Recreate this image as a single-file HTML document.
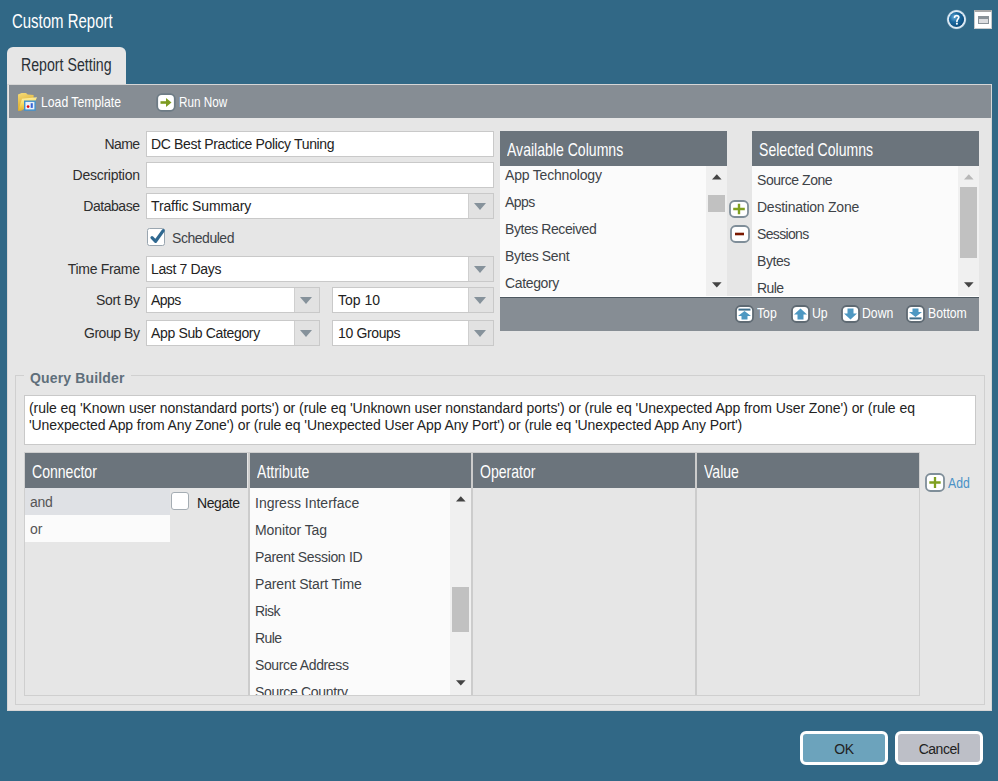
<!DOCTYPE html>
<html><head><meta charset="utf-8">
<style>
*{box-sizing:border-box;margin:0;padding:0}
html,body{width:998px;height:781px;overflow:hidden;background:#316886;font-family:"Liberation Sans",sans-serif;}
.a{position:absolute}
.c{position:absolute;white-space:nowrap;transform-origin:0 0}
.t{position:absolute;white-space:nowrap;font-size:14px;letter-spacing:-0.3px;color:#3e4348}
#title{left:12px;top:10px;color:#fff;font-size:20px;transform:scaleX(0.748)}
#help{left:947px;top:10px;width:19px;height:19px;border-radius:50%;background:radial-gradient(circle at 45% 40%,#3f8fc4 0,#1f5f93 60%,#174e7c 100%);border:2px solid #dce8f0}
#max{left:974px;top:10px;width:18px;height:19px;background:#fff;border:1px solid #c8cacc;border-top:2px solid #a8a8a8}
#max i{position:absolute;left:3px;top:4px;width:11px;height:8px;background:#dcdde0;border:1.5px solid #8a9298;border-top:3px solid #8a9298}
#tab{left:7px;top:47px;width:119px;height:38px;background:#e6e6e6;border-radius:6px 6px 0 0}
#tabtxt{left:21px;top:54.5px;color:#2a3036;font-size:18px;transform:scaleX(0.787)}
#panel{left:7px;top:84px;width:985px;height:627px;background:#e6e6e6;border:1px solid #d6d6d6}
#toolbar{left:9px;top:85px;width:982px;height:33px;background:#868d94}
.tb{color:#fff;font-size:15px;top:93px;transform:scaleX(0.815)}
.lbl{right:858px;text-align:right;color:#2e2e2e}
.inp{position:absolute;background:#fff;border:1px solid #c9c9c9}
.dd{position:absolute;top:0;right:0;width:25px;height:100%;background:#e2e2e2;border-left:1px solid #cfcfcf}
.dd:after{content:"";position:absolute;left:5px;top:9px;border-left:6.8px solid transparent;border-right:6.8px solid transparent;border-top:7px solid #86929b}
.hdr{position:absolute;background:#6b747c;color:#fff}
.hdr span{position:absolute;left:7px;top:8px;font-size:18.5px;transform:scaleX(0.76);transform-origin:0 0;white-space:nowrap}
.list{position:absolute;background:#fbfbfb}
.sb{position:absolute;background:#f0f0f0}
.up,.dn{position:absolute;width:0;height:0;border-left:4.8px solid transparent;border-right:4.8px solid transparent;margin-left:0.7px}
.up{border-bottom:5.5px solid #444}
.dn{border-top:5.5px solid #444}
.thumb{position:absolute;background:#c1c1c1}
.bar{position:absolute;background:#868d94}
.bt{color:#fff;font-size:15.5px;top:304px;transform:scaleX(0.79)}
.ico{position:absolute;width:18px;height:18px;border-radius:4px;background:#fff;border:1.5px solid #7f8a93}
.btn{position:absolute;border:3px solid #fff;border-radius:6px;text-align:center;color:#222;font-size:14px;letter-spacing:-0.3px}
</style></head><body>
<div id="title" class="c">Custom Report</div>
<svg class="a" style="left:946px;top:9px" width="21" height="21" viewBox="0 0 21 21"><defs><radialGradient id="hg" cx="35%" cy="35%" r="70%"><stop offset="0" stop-color="#6aaedb"/><stop offset="0.45" stop-color="#1c6aa0"/><stop offset="1" stop-color="#0a4a7a"/></radialGradient><radialGradient id="rg" cx="50%" cy="50%" r="50%"><stop offset="0.75" stop-color="#f2f7fb"/><stop offset="0.9" stop-color="#c9dcea"/><stop offset="1" stop-color="#8fb2cc" stop-opacity="0.3"/></radialGradient></defs><circle cx="10.5" cy="10.5" r="10" fill="url(#rg)"/><circle cx="10.5" cy="10.5" r="7.6" fill="url(#hg)"/><path d="M8.6 8.2 C8.6 6.1 12.8 6.1 12.8 8.3 C12.8 9.9 10.9 10.2 10.9 12.4" stroke="#fff" stroke-width="1.7" fill="none" stroke-linecap="round"/><circle cx="10.9" cy="14.7" r="1.05" fill="#fff"/></svg>
<div id="max" class="a"><i></i></div>

<div id="tab" class="a"></div>
<div id="panel" class="a"></div>
<div id="tabtxt" class="c">Report Setting</div>
<div id="toolbar" class="a"></div>
<svg class="a" style="left:15px;top:90px" width="24" height="23" viewBox="0 0 24 23"><defs><linearGradient id="fg" x1="0" y1="0" x2="0.3" y2="1"><stop offset="0" stop-color="#f6dc7a"/><stop offset="1" stop-color="#d9a41e"/></linearGradient><linearGradient id="fg2" x1="0" y1="0" x2="0.2" y2="1"><stop offset="0" stop-color="#fff6b8"/><stop offset="0.5" stop-color="#f7dc66"/><stop offset="1" stop-color="#e2b02a"/></linearGradient></defs><path d="M3 4.6 L6.6 3 L11 3 L12.6 4.6 L18.6 5 L18.6 10 L3.4 20.8 L3 20.8 Z" fill="url(#fg)"/><path d="M7 8.8 L22 7.2 L19.6 13 L6 20.8 L3.2 20.8 Z" fill="url(#fg2)"/><rect x="9.7" y="11.2" width="10.4" height="8.9" fill="#eaf2f9" stroke="#3f90cc" stroke-width="1.4"/><circle cx="13.1" cy="16.6" r="1.35" fill="#e20a0a"/><rect x="15.7" y="13.2" width="2.1" height="4.7" fill="#3a66d6"/></svg>
<div class="c tb" style="left:41px">Load Template</div>
<svg class="a" style="left:156px;top:92.5px" width="20" height="19" viewBox="0 0 20 19"><rect x="1.2" y="1.2" width="17.6" height="16.6" rx="4.5" fill="#fff" stroke="#6d7b85" stroke-width="1.8"/><path d="M4.5 9.5 H11" stroke="#7d9b22" stroke-width="2.6"/><path d="M10 5 L15.5 9.5 L10 14 Z" fill="#7d9b22"/></svg>
<div class="c tb" style="left:178.5px;transform:scaleX(0.78)">Run Now</div>

<!-- form labels -->
<div class="t lbl" style="top:136px;letter-spacing:-0.62px;margin-right:0.62px">Name</div>
<div class="t lbl" style="top:167px;letter-spacing:-0.26px;margin-right:0.26px">Description</div>
<div class="t lbl" style="top:198px;letter-spacing:-0.47px;margin-right:0.47px">Database</div>
<div class="t lbl" style="top:261px;letter-spacing:-0.30px;margin-right:0.30px">Time Frame</div>
<div class="t lbl" style="top:292px;letter-spacing:-0.32px;margin-right:0.32px">Sort By</div>
<div class="t lbl" style="top:325px;letter-spacing:-0.44px;margin-right:0.44px">Group By</div>

<div class="inp" style="left:146px;top:131px;width:348px;height:26px"></div>
<div class="t" style="left:151px;top:136px;color:#222;letter-spacing:-0.35px">DC Best Practice Policy Tuning</div>
<div class="inp" style="left:146px;top:162px;width:348px;height:26px"></div>
<div class="inp" style="left:146px;top:193px;width:348px;height:26px"><div class="dd"></div></div>
<div class="t" style="left:151px;top:198px;color:#222;letter-spacing:-0.12px">Traffic Summary</div>

<div class="a" style="left:147px;top:228px;width:18px;height:18px;background:#fff;border:1.6px solid #9aa6b0;border-radius:2.5px"></div><svg class="a" style="left:147px;top:228px" width="19" height="18" viewBox="0 0 19 18"><path d="M5 9.7 L8.6 13.3 L16.2 2.6" stroke="#2f6890" stroke-width="3.2" fill="none" stroke-linecap="round" stroke-linejoin="round"/></svg>
<div class="t" style="left:172px;top:230px;letter-spacing:-0.46px">Scheduled</div>

<div class="inp" style="left:146px;top:256px;width:348px;height:26px"><div class="dd"></div></div>
<div class="t" style="left:151px;top:261px;color:#222;letter-spacing:-0.35px">Last 7 Days</div>
<div class="inp" style="left:146px;top:287px;width:174px;height:26px"><div class="dd"></div></div>
<div class="t" style="left:151px;top:292px;color:#222;letter-spacing:-0.59px">Apps</div>
<div class="inp" style="left:332px;top:287px;width:162px;height:26px"><div class="dd"></div></div>
<div class="t" style="left:338px;top:292px;color:#222;letter-spacing:-0.02px">Top 10</div>
<div class="inp" style="left:146px;top:320px;width:174px;height:26px"><div class="dd"></div></div>
<div class="t" style="left:151px;top:325px;color:#222;letter-spacing:-0.35px">App Sub Category</div>
<div class="inp" style="left:332px;top:320px;width:162px;height:26px"><div class="dd"></div></div>
<div class="t" style="left:338px;top:325px;color:#222;letter-spacing:-0.36px">10 Groups</div>

<!-- available columns -->
<div class="hdr" style="left:500px;top:131px;width:227px;height:35px"><span>Available Columns</span></div>
<div class="list" style="left:500px;top:166px;width:227px;height:131px"></div>
<div class="sb" style="left:706px;top:166px;width:21px;height:131px"></div>
<svg class="a" style="left:711.8px;top:174.2px" width="10" height="6" viewBox="0 0 10 6"><polygon points="0,5.6 9.6,5.6 4.8,0.3" fill="#444"/></svg>
<div class="thumb" style="left:708px;top:195px;width:17px;height:17px"></div>
<svg class="a" style="left:711.8px;top:281.8px" width="10" height="6" viewBox="0 0 10 6"><polygon points="0,0.3 9.6,0.3 4.8,5.5" fill="#444"/></svg>
<div class="t" style="left:505px;top:167px;letter-spacing:-0.19px">App Technology</div>
<div class="t" style="left:505px;top:194px;letter-spacing:-0.59px">Apps</div>
<div class="t" style="left:505px;top:221px;letter-spacing:-0.43px">Bytes Received</div>
<div class="t" style="left:505px;top:248px;letter-spacing:-0.34px">Bytes Sent</div>
<div class="t" style="left:505px;top:275px;letter-spacing:-0.36px">Category</div>

<!-- selected columns -->
<div class="hdr" style="left:752px;top:131px;width:227px;height:35px"><span>Selected Columns</span></div>
<div class="list" style="left:752px;top:166px;width:227px;height:131px"></div>
<div class="sb" style="left:958px;top:166px;width:21px;height:131px"></div>
<svg class="a" style="left:963.8px;top:174.2px" width="10" height="6" viewBox="0 0 10 6"><polygon points="0,5.6 9.6,5.6 4.8,0.3" fill="#b8b8b8"/></svg>
<div class="thumb" style="left:960px;top:187px;width:17px;height:71px"></div>
<svg class="a" style="left:963.8px;top:281.8px" width="10" height="6" viewBox="0 0 10 6"><polygon points="0,0.3 9.6,0.3 4.8,5.5" fill="#444"/></svg>
<div class="t" style="left:757px;top:172px;letter-spacing:-0.45px">Source Zone</div>
<div class="t" style="left:757px;top:199px;letter-spacing:-0.24px">Destination Zone</div>
<div class="t" style="left:757px;top:226px;letter-spacing:-0.66px">Sessions</div>
<div class="t" style="left:757px;top:253px;letter-spacing:-0.43px">Bytes</div>
<div class="t" style="left:757px;top:280px;letter-spacing:-0.58px">Rule</div>
<div class="a" style="left:752px;top:296px;width:227px;height:1px;background:#fbfbfb"></div>

<svg class="a" style="left:729px;top:200px" width="20" height="18" viewBox="0 0 20 18"><rect x="1" y="1" width="18" height="16" rx="4.5" fill="#fff" stroke="#7f8e99" stroke-width="1.8"/><path d="M10 3.7 V14.3 M4.2 9 H15.8" stroke="#80a020" stroke-width="2.4"/></svg>
<svg class="a" style="left:730px;top:225px" width="20" height="18" viewBox="0 0 20 18"><rect x="1" y="1" width="18" height="16" rx="4.5" fill="#fff" stroke="#7f8e99" stroke-width="1.8"/><path d="M5 9 H14" stroke="#7a1800" stroke-width="2.6"/></svg>

<div class="a" style="left:500px;top:296px;width:479px;height:1px;background:#fff"></div><div class="bar" style="left:500px;top:297px;width:479px;height:34px;border-top:1px solid #4d5860"></div>
<svg class="a" style="left:735px;top:305px" width="19" height="18" viewBox="0 0 19 18"><rect x="1" y="1" width="17" height="16" rx="4.5" fill="#fff" stroke="#5f6a73" stroke-width="1.8"/><rect x="3.5" y="3.6" width="12" height="2" fill="#3f6f8c"/><path d="M9.5 6 L16 11 H12.5 V14.5 H6.5 V11 H3 Z" fill="#4e98c2"/></svg>
<div class="c bt" style="left:757px">Top</div>
<svg class="a" style="left:791px;top:305px" width="19" height="18" viewBox="0 0 19 18"><rect x="1" y="1" width="17" height="16" rx="4.5" fill="#fff" stroke="#5f6a73" stroke-width="1.8"/><path d="M9.5 3.5 L16 9.5 H12.5 V14.5 H6.5 V9.5 H3 Z" fill="#4e98c2"/></svg>
<div class="c bt" style="left:812px">Up</div>
<svg class="a" style="left:841px;top:305px" width="19" height="18" viewBox="0 0 19 18"><rect x="1" y="1" width="17" height="16" rx="4.5" fill="#fff" stroke="#5f6a73" stroke-width="1.8"/><path d="M9.5 14.5 L16 8.5 H12.5 V3.5 H6.5 V8.5 H3 Z" fill="#4e98c2"/></svg>
<div class="c bt" style="left:862px">Down</div>
<svg class="a" style="left:906px;top:305px" width="19" height="18" viewBox="0 0 19 18"><rect x="1" y="1" width="17" height="16" rx="4.5" fill="#fff" stroke="#5f6a73" stroke-width="1.8"/><path d="M9.5 12 L16 7 H12.5 V3.5 H6.5 V7 H3 Z" fill="#4e98c2"/><rect x="3.5" y="12.4" width="12" height="2" fill="#3f6f8c"/></svg>
<div class="c bt" style="left:928px">Bottom</div>

<!-- query builder -->
<div class="a" style="left:15px;top:375px;width:970px;height:330px;border:1px solid #d0d0d0"></div>
<div class="a" style="left:24px;top:366px;width:107px;height:16px;background:#e6e6e6"></div>
<div class="t" style="left:30px;top:370px;font-weight:bold;color:#5f6f7b;letter-spacing:0.15px">Query Builder</div>
<div class="inp" style="left:24px;top:395px;width:952px;height:50px"></div>
<div class="t" style="left:29px;top:400px;color:#222;letter-spacing:-0.05px">(rule eq 'Known user nonstandard ports') or (rule eq 'Unknown user nonstandard ports') or (rule eq 'Unexpected App from User Zone') or (rule eq</div>
<div class="t" style="left:29px;top:417px;color:#222;letter-spacing:-0.09px">'Unexpected App from Any Zone') or (rule eq 'Unexpected User App Any Port') or (rule eq 'Unexpected App Any Port')</div>

<div class="a" style="left:24px;top:452px;width:896px;height:244px;border:1px solid #cfcfcf;background:#e6e6e6"></div>
<div class="hdr" style="left:25px;top:453px;width:222px;height:35px"><span>Connector</span></div>
<div class="hdr" style="left:250px;top:453px;width:221px;height:35px"><span>Attribute</span></div>
<div class="hdr" style="left:473px;top:453px;width:222px;height:35px"><span>Operator</span></div>
<div class="hdr" style="left:697px;top:453px;width:222px;height:35px"><span>Value</span></div>
<div class="a" style="left:248px;top:452px;width:2px;height:243px;background:#cccccc"></div>
<div class="a" style="left:471px;top:452px;width:2px;height:243px;background:#cccccc"></div>
<div class="a" style="left:695px;top:452px;width:2px;height:243px;background:#cccccc"></div>

<div class="a" style="left:25px;top:488px;width:145px;height:27px;background:#dfe1e5"></div>
<div class="a" style="left:25px;top:515px;width:145px;height:27px;background:#fbfbfb"></div>
<div class="t" style="left:30px;top:494px;color:#555;letter-spacing:-0.28px">and</div>
<div class="t" style="left:30px;top:521px;color:#555;letter-spacing:-0.03px">or</div>
<div class="a" style="left:171px;top:492px;width:18px;height:18px;background:#fff;border:1.5px solid #a5adb3;border-radius:3px"></div>
<div class="t" style="left:197px;top:495px;color:#222;letter-spacing:-0.42px">Negate</div>

<div class="list" style="left:250px;top:488px;width:221px;height:207px"></div>
<div class="sb" style="left:450px;top:488px;width:21px;height:207px"></div>
<svg class="a" style="left:455.8px;top:496.2px" width="10" height="6" viewBox="0 0 10 6"><polygon points="0,5.6 9.6,5.6 4.8,0.3" fill="#444"/></svg>
<div class="thumb" style="left:452px;top:587px;width:17px;height:45px"></div>
<svg class="a" style="left:455.8px;top:679.6px" width="10" height="6" viewBox="0 0 10 6"><polygon points="0,0.3 9.6,0.3 4.8,5.5" fill="#444"/></svg>
<div class="a" style="left:250px;top:488px;width:200px;height:207px;overflow:hidden"><div class="t" style="left:5px;top:7px;letter-spacing:-0.00px">Ingress Interface</div><div class="t" style="left:5px;top:34px;letter-spacing:-0.08px">Monitor Tag</div><div class="t" style="left:5px;top:61px;letter-spacing:-0.33px">Parent Session ID</div><div class="t" style="left:5px;top:88px;letter-spacing:-0.14px">Parent Start Time</div><div class="t" style="left:5px;top:115px;letter-spacing:-0.61px">Risk</div><div class="t" style="left:5px;top:142px;letter-spacing:-0.58px">Rule</div><div class="t" style="left:5px;top:169px;letter-spacing:-0.38px">Source Address</div><div class="t" style="left:5px;top:196px;letter-spacing:-0.32px">Source Country</div></div>

<svg class="a" style="left:925px;top:472.6px" width="20" height="19" viewBox="0 0 20 19"><rect x="1" y="1" width="18" height="17" rx="4.5" fill="#fff" stroke="#7f8e99" stroke-width="1.8"/><path d="M10 4 V15 M4.3 9.5 H15.7" stroke="#80a020" stroke-width="2.3"/></svg>
<div class="c" style="left:948px;top:474px;color:#4b92c6;font-size:15px;transform:scaleX(0.815)">Add</div>

<div class="btn" style="left:800px;top:731px;width:88px;height:34px;background:#6ca3bc;line-height:31px">OK</div>
<div class="btn" style="left:895px;top:731px;width:88px;height:34px;background:#bdbfc7;line-height:31px;letter-spacing:-0.5px">Cancel</div>
</body></html>
